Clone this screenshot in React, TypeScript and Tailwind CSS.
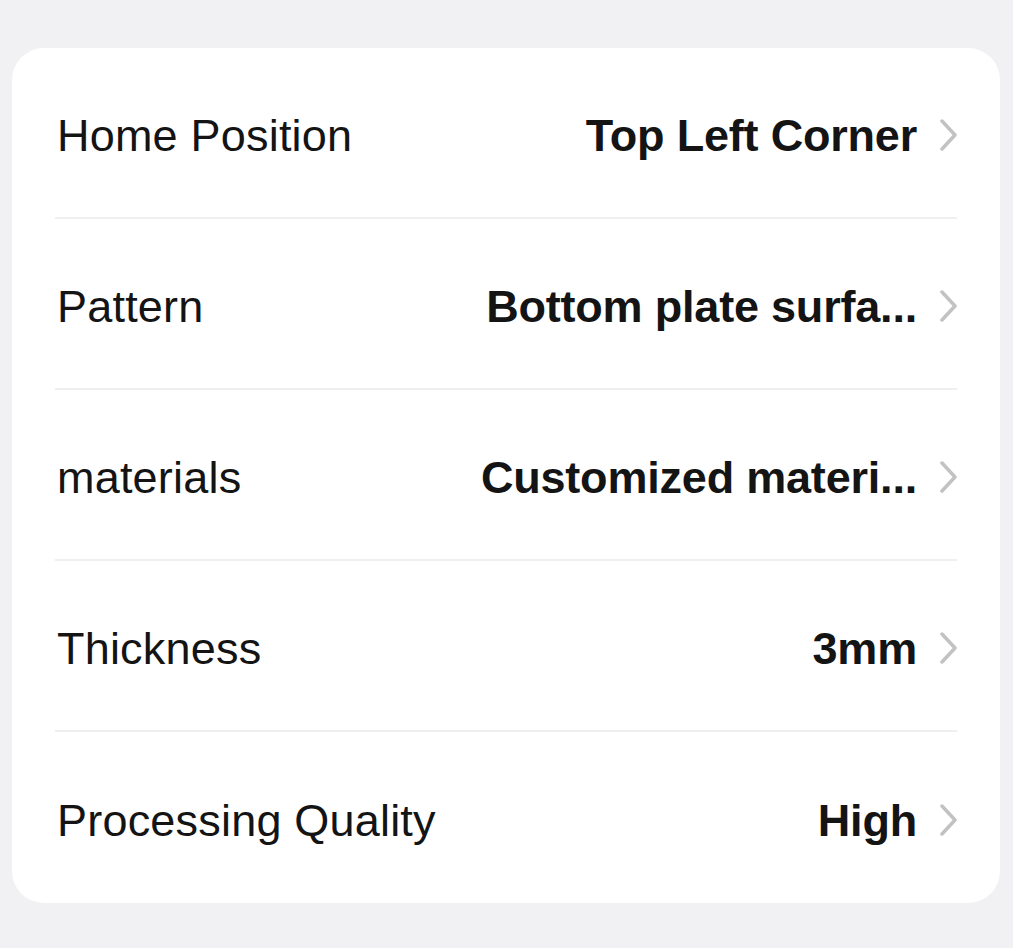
import React from 'react';

const rows = [
  { label: 'Home Position', value: 'Top Left Corner' },
  { label: 'Pattern', value: 'Bottom plate surfa...' },
  { label: 'materials', value: 'Customized materi...' },
  { label: 'Thickness', value: '3mm' },
  { label: 'Processing Quality', value: 'High' },
];

const Chevron = () => (
  <svg width="17" height="32" viewBox="0 0 17 32" fill="none" className="shrink-0 mb-[2px]">
    <path d="M2 2 L15 16 L2 30" stroke="#c2c2c2" strokeWidth="3.5" strokeLinecap="round" strokeLinejoin="round" />
  </svg>
);

const App = () => {
  return (
    <div className="w-[1013px] h-[948px] bg-[#f1f1f3] pt-[48px] px-[12px] font-['Liberation_Sans',Arial,sans-serif]">
      <div className="w-[988px] bg-white rounded-[32px] pl-[43px] pr-[43px]">
        {rows.map((row, i) => (
          <div
            key={row.label}
            className={`h-[171px] pt-[6px] flex items-center justify-between ${i < rows.length - 1 ? 'border-b-2 border-[#efeff0]' : ''}`}
          >
            <span className="text-[45px] text-[#141414] tracking-[0.2px] pl-[2px]">{row.label}</span>
            <div className="flex items-center gap-[23px]">
              <span className="text-[45px] font-bold text-[#141414] tracking-[-0.2px]">{row.value}</span>
              <Chevron />
            </div>
          </div>
        ))}
      </div>
    </div>
  );
};

export default App;
